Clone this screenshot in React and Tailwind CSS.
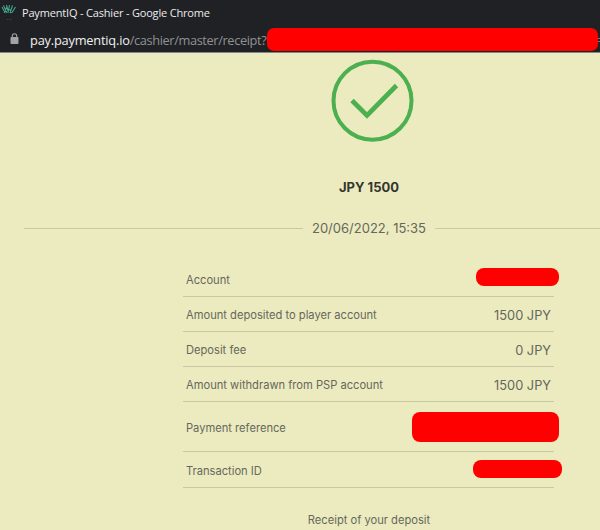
import React from 'react';

const rows = [
    { label: 'Account', height: 'h-[35px]', mask: 'w-[83px] h-[18px] rounded-[8px] -mr-[8px] -mt-[6px]' },
    { label: 'Amount deposited to player account', value: '1500 JPY', height: 'h-[35px]' },
    { label: 'Deposit fee', value: '0 JPY', height: 'h-[35px]' },
    { label: 'Amount withdrawn from PSP account', value: '1500 JPY', height: 'h-[35px]' },
    { label: 'Payment reference', height: 'h-[50px]', mask: 'w-[147px] h-[30px] rounded-[8px] -mr-[8px] -mt-[2px]' },
    { label: 'Transaction ID', height: 'h-[36px]', mask: 'w-[89px] h-[18px] rounded-[8px] -mr-[11px] -mt-[4px]' },
];

const Logo = () => (
    <svg className="w-4 h-5 shrink-0" viewBox="0 0 16 20" fill="none" stroke="#43ab93" strokeWidth="1.05">
        <path d="M2 4l3 5.500M3.500 2.500l3.500 7.500M6.500 2l2 7.500M9.500 2l-1.500 7.500M12.500 2.500l-2.500 7.500M15.500 4l-3.500 5.500M4.500 10l2.500-6.500M9.500 6l2 4" />
        <path d="M7 16.500h1.500M10 16.500h1.500" stroke="#4a4b4d" strokeWidth="0.8" />
    </svg>
);

const BrowserBar = () => (
    <header className="h-[53px] bg-[#202124] border-b border-[#85858a] font-['Open_Sans','Noto_Sans',sans-serif] whitespace-nowrap">
        <div className="flex items-center h-[26px]">
            <Logo />
            <span className="ml-[6px] -mt-px text-[11px] leading-none tracking-[-0.180px] text-[#ececec]">PaymentIQ - Cashier - Google Chrome</span>
        </div>
        <div className="flex items-center h-[26px] pl-[10px]">
            <svg className="w-[9px] h-[12px] shrink-0" viewBox="0 0 9 12">
                <rect x="0.500" y="4" width="8" height="7" rx="0.800" fill="#a0a3a7" />
                <path d="M2.300 4.500V3a2.200 2.200 0 0 1 4.400 0v1.500" fill="none" stroke="#a0a3a7" strokeWidth="1.100" />
            </svg>
            <span className="ml-[11px] mt-[2px] w-[237px] shrink-0 text-[12.800px] leading-none tracking-[-0.380px] text-[#8f9195]">
                <span className="tracking-[-0.200px] text-[#f1f1f2]">pay.paymentiq.io</span>/cashier/master/receipt?
            </span>
            <span className="w-[331px] h-[23px] mt-px shrink-0 rounded-[7px] bg-[#ff0000]" />
            <span className="w-[2px] h-[4px] mt-[2px] shrink-0 border-y border-[#77797d]" />
        </div>
    </header>
);

const App = () => {
    return (
        <div className="w-[600px] h-[530px] overflow-hidden bg-[#ebebbf] font-['Inter',sans-serif] text-[#66675c]">
            <BrowserBar />
            <main className="flex flex-col">
                <svg className="ml-[331px] mt-[6px] w-[83px] h-[83px]" viewBox="0 0 83 83" fill="none" stroke="#4caf50">
                    <circle cx="41.500" cy="41.700" r="39" strokeWidth="4" />
                    <path d="M21 41.500l15 15L65.500 26.500" strokeWidth="4.700" />
                </svg>
                <h1 className="ml-[24px] w-[690px] mt-[35px] text-center text-[13px] leading-5 font-bold text-[#33352f]">JPY 1500</h1>
                <div className="flex items-center ml-[24px] mt-[21px] w-[690px] h-5">
                    <span className="grow h-px bg-[#c9c9a5]" />
                    <span className="mx-[9px] text-[13px] leading-5 whitespace-nowrap">20/06/2022, 15:35</span>
                    <span className="grow h-px bg-[#c9c9a5]" />
                </div>
                <div className="ml-[183px] mt-[24px] w-[371px]">
                    {rows.map((row) => (
                        <div key={row.label} className={`flex items-center justify-between px-[3px] pt-[2px] border-b border-[#c8c8a4] ${row.height}`}>
                            <span className="text-[11.150px] leading-4">{row.label}</span>
                            {row.mask ? (
                                <span className={`bg-[#ff0000] ${row.mask}`} />
                            ) : (
                                <span className="mt-[2px] text-[12.800px] leading-4">{row.value}</span>
                            )}
                        </div>
                    ))}
                </div>
                <p className="ml-[24px] w-[690px] mt-[24px] text-center text-[11.150px] leading-4">Receipt of your deposit</p>
            </main>
        </div>
    );
};

export default App;
